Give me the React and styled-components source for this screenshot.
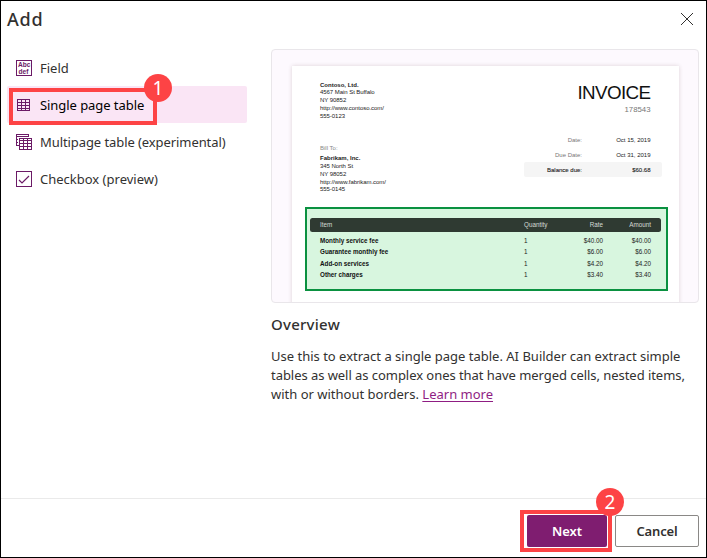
import React from 'react';
import styled, { createGlobalStyle } from 'styled-components';

const Global = createGlobalStyle`
  *, *::before, *::after { box-sizing: border-box; }
  body { margin: 0; background: #fff; }
`;

const Dialog = styled.main`
  width: 707px;
  height: 558px;
  border: 1px solid #000;
  display: flex;
  flex-direction: column;
  overflow: hidden;
  background: #fff;
  color: #323130;
  font: 13px/19px 'Noto Sans', 'Open Sans', sans-serif;
`;

const Header = styled.header`
  display: flex;
  justify-content: space-between;
  height: 48px;
  padding: 4px 12px 0 6px;
`;

const Title = styled.h1`
  margin: 0;
  font-size: 18px;
  line-height: 28px;
  font-weight: 500;
  letter-spacing: 0.8px;
`;

const CloseButton = styled.button`
  width: 14px;
  height: 14px;
  margin-top: 7px;
  padding: 0;
  border: 0;
  background: none;
  color: #323130;
  svg { display: block; }
`;

const Body = styled.div`
  display: flex;
  flex: 1;
  min-height: 0;
`;

const Options = styled.nav`
  width: 240px;
  margin-left: 6px;
`;

const Option = styled.div`
  position: relative;
  display: flex;
  align-items: flex-start;
  gap: 8px;
  height: 37px;
  padding: 10px 0 0 9px;
  border-radius: 2px;
  white-space: nowrap;
  letter-spacing: ${(p) => p.$spacing || 0}px;
  color: ${(p) => (p.$selected ? '#000' : '#323130')};
  background: ${(p) => (p.$selected ? '#fae5f5' : 'transparent')};
  svg { flex: none; margin-top: 1px; color: #6b1a66; }
`;

const Highlight = styled.div`
  position: absolute;
  border: 4px solid #fd4345;
  left: ${(p) => p.$x}px;
  top: ${(p) => p.$y}px;
  width: ${(p) => p.$w}px;
  height: ${(p) => p.$h}px;
`;

const Step = styled.span`
  position: absolute;
  top: ${(p) => p.$top}px;
  right: ${(p) => p.$right}px;
  width: 28px;
  height: 28px;
  border-radius: 50%;
  background: #fd4345;
  color: #fff;
  font: 19px/28px 'Noto Sans', sans-serif;
  letter-spacing: 0;
  text-align: center;
`;

const Details = styled.section`
  width: 428px;
  margin-left: 24px;
`;

const Preview = styled.div`
  height: 254px;
  padding: 16px 19px 0 20px;
  border: 1px solid #e9e6ea;
  border-radius: 4px;
  background: #fdf9fe;
  overflow: hidden;
`;

const Paper = styled.div`
  height: 240px;
  padding: 14px 11px 0 13px;
  background: #fff;
  box-shadow: 0 0 4px rgba(70, 40, 40, 0.18);
  color: #222;
  font: 6px/7.75px 'Liberation Sans', Arial, sans-serif;
  white-space: nowrap;
`;

const InvoiceTop = styled.div`
  display: flex;
  justify-content: space-between;
  height: 127px;
`;

const Parties = styled.div`
  padding: 1.5px 0 0 15px;
`;

const Address = styled.address`
  font-style: normal;
  letter-spacing: -0.05px;
  height: ${(p) => p.$height || 'auto'};
  strong { letter-spacing: 0; }
`;

const Caption = styled.div`
  color: #888;
  margin-bottom: 3px;
`;

const Summary = styled.div`
  display: flex;
  flex-direction: column;
  width: 138px;
  margin-right: 6px;
  text-align: right;
`;

const InvoiceTitle = styled.div`
  font-size: 18.8px;
  line-height: 25px;
  letter-spacing: -0.6px;
  color: #111;
  padding-right: 11.5px;
`;

const InvoiceNumber = styled.div`
  font-size: 7.8px;
  line-height: 9px;
  color: #777;
  padding-right: 11.5px;
  margin-bottom: 18px;
`;

const SummaryRow = styled.div`
  display: grid;
  grid-template-columns: 58px 1fr;
  height: 15px;
  line-height: 17px;
  padding-right: 11.5px;
  border-radius: 2px;
  background: ${(p) => (p.$filled ? '#f5f5f5' : 'transparent')};
  -webkit-text-stroke: ${(p) => (p.$filled ? '0.1px' : '0')};
  span:first-child { color: ${(p) => (p.$filled ? '#222' : '#777')}; }
`;

const TableFrame = styled.div`
  height: 84px;
  padding: 9px 5px 0 3px;
  border: 2px solid #0a9140;
  background: #d8f6df;
`;

const TableRow = styled.div`
  display: grid;
  grid-template-columns: 204px 24px 55px 1fr;
  height: 11.25px;
  font-size: 6.3px;
  line-height: 11.25px;
  padding: 0 10px;
  text-align: right;
  span:first-child { text-align: left; font-weight: 700; color: #111; }
  span:nth-child(2) { text-align: left; }
`;

const TableHead = styled(TableRow)`
  height: 13.5px;
  line-height: 14px;
  margin-bottom: 3.5px;
  border-radius: 2.5px;
  background: #2f3a32;
  color: #d5dad6;
  span:first-child { color: #d5dad6; font-weight: 400; }
`;

const Subtitle = styled.h2`
  margin: 11px 0 13px;
  font-size: 15px;
  line-height: 20px;
  font-weight: 500;
  letter-spacing: 0.25px;
`;

const Line = styled.div`
  white-space: nowrap;
  letter-spacing: ${(p) => p.$spacing || 0}px;
`;

const Link = styled.a`
  color: #8f1d83;
  text-decoration: underline;
  text-underline-offset: 2px;
`;

const Footer = styled.footer`
  display: flex;
  justify-content: flex-end;
  gap: 8px;
  height: 59px;
  padding: 16px 7px 0 0;
  border-top: 1px solid #eaeaea;
`;

const Button = styled.button`
  position: relative;
  width: ${(p) => (p.$primary ? 80 : 84)}px;
  height: 32px;
  padding: 0;
  border: ${(p) => (p.$primary ? '0' : '1px solid #8a8886')};
  border-radius: 2px;
  background: ${(p) => (p.$primary ? '#7f1d70' : '#fff')};
  color: ${(p) => (p.$primary ? '#fff' : '#323130')};
  font: 600 13px/20px 'Noto Sans', sans-serif;
  letter-spacing: ${(p) => (p.$primary ? 0 : -0.15)}px;
`;

const FieldIcon = () => (
  <svg width="16" height="16" viewBox="0 0 16 16">
    <rect x=".5" y=".5" width="15" height="15" fill="none" stroke="currentColor" />
    <g fill="currentColor" fontFamily="Liberation Sans, sans-serif" fontSize="6.600" fontWeight="700" letterSpacing="0">
      <text x="2" y="7">Abc</text>
      <text x="2.500" y="13.800">def</text>
    </g>
  </svg>
);

const TableIcon = () => (
  <svg width="16" height="16" viewBox="0 0 16 16" fill="none" stroke="currentColor" shapeRendering="crispEdges">
    <path d="M1.500 2.500h12v11h-12zM1 5.500h13M1 8.500h13M1 11.500h13M5.500 2v12M9.500 2v12" />
  </svg>
);

const MultiTableIcon = () => (
  <svg width="16" height="16" viewBox="0 0 16 16" fill="none" stroke="currentColor" shapeRendering="crispEdges">
    <path d="M12.500 3V.5H.5v11H3M0 2.500h13M0 5.500h2M0 8.500h2M3.500 4.500h12v11h-12zM3 6.500h13M3 9.500h13M3 12.500h13M7.500 5v11M11.500 5v11" />
  </svg>
);

const CheckIcon = () => (
  <svg width="16" height="16" viewBox="0 0 16 16" fill="none" stroke="currentColor">
    <rect x=".5" y=".5" width="15" height="15" />
    <path d="m3 9 3 3 7-7" strokeWidth="1.200" />
  </svg>
);

const items = [
  ['Monthly service fee', '$40.00'],
  ['Guarantee monthly fee', '$6.00'],
  ['Add-on services', '$4.20'],
  ['Other charges', '$3.40'],
];

export default function App() {
  return (
    <>
      <Global />
      <Dialog>
        <Header>
          <Title>Add</Title>
          <CloseButton aria-label="Close">
            <svg width="14" height="14" viewBox="0 0 14 14" stroke="currentColor">
              <path d="m1 1 12 12M13 1 1 13" />
            </svg>
          </CloseButton>
        </Header>
        <Body>
          <Options>
            <Option><FieldIcon />Field</Option>
            <Option $selected $spacing={-0.06}>
              <TableIcon />Single page table
              <Highlight $x={2} $y={2} $w={148} $h={37}><Step $top={-18} $right={-19}>1</Step></Highlight>
            </Option>
            <Option $spacing={-0.08}><MultiTableIcon />Multipage table (experimental)</Option>
            <Option><CheckIcon />Checkbox (preview)</Option>
          </Options>
          <Details>
            <Preview>
              <Paper>
                <InvoiceTop>
                  <Parties>
                    <Address $height="63px">
                      <strong>Contoso, Ltd.</strong><br />4567 Main St Buffalo<br />NY 90852<br />
                      http://www.contoso.com/<br />555-0123
                    </Address>
                    <Caption>Bill To:</Caption>
                    <Address>
                      <strong>Fabrikam, Inc.</strong><br />345 North St<br />NY 98052<br />
                      http://www.fabrikam.com/<br />555-0145
                    </Address>
                  </Parties>
                  <Summary>
                    <InvoiceTitle>INVOICE</InvoiceTitle>
                    <InvoiceNumber>178543</InvoiceNumber>
                    <SummaryRow><span>Date:</span><span>Oct 15, 2019</span></SummaryRow>
                    <SummaryRow><span>Due Date:</span><span>Oct 31, 2019</span></SummaryRow>
                    <SummaryRow $filled><span>Balance due:</span><span>$60.68</span></SummaryRow>
                  </Summary>
                </InvoiceTop>
                <TableFrame>
                  <TableHead><span>Item</span><span>Quantity</span><span>Rate</span><span>Amount</span></TableHead>
                  {items.map(([name, price]) => (
                    <TableRow key={name}><span>{name}</span><span>1</span><span>{price}</span><span>{price}</span></TableRow>
                  ))}
                </TableFrame>
              </Paper>
            </Preview>
            <Subtitle>Overview</Subtitle>
            <Line>Use this to extract a single page table. AI Builder can extract simple</Line>
            <Line $spacing={-0.05}>tables as well as complex ones that have merged cells, nested items,</Line>
            <Line>with or without borders. <Link>Learn more</Link></Line>
          </Details>
        </Body>
        <Footer>
          <Button $primary>Next<Highlight $x={-7} $y={-5} $w={92} $h={42}><Step $top={-26} $right={-16}>2</Step></Highlight></Button>
          <Button>Cancel</Button>
        </Footer>
      </Dialog>
    </>
  );
}
